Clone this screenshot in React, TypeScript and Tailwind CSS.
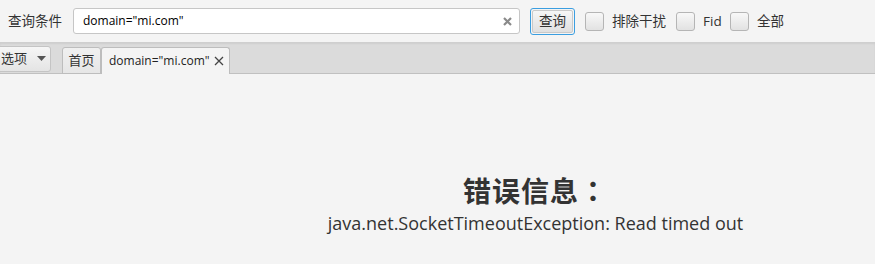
import React from "react";

const font = { fontFamily: '"Open Sans", "Noto Sans CJK SC", sans-serif' };
const titleFont = { fontFamily: '"Noto Sans CJK TC", sans-serif' };

function Check({ label }: { label: string }) {
  return (
    <div className="flex items-center gap-[8px] whitespace-nowrap">
      <div className="w-[19px] h-[19px] shrink-0 rounded-[3px] border border-[#b5b5b5] bg-gradient-to-b from-[#f8f8f8] to-[#e2e2e2]" />
      <span className="text-[13.5px] text-[#333]">{label}</span>
    </div>
  );
}

export default function App() {
  return (
    <div className="w-[875px] h-[264px] bg-[#f4f4f4] overflow-hidden flex flex-col" style={font}>
      <div className="h-[42px] flex items-center pl-[8px] shrink-0 whitespace-nowrap">
        <span className="text-[13.5px] text-[#333] w-[65px]">查询条件</span>
        <div className="w-[447px] h-[26px] bg-white border border-[#c6c6c6] rounded-[3px] flex items-center pl-[9px] pr-[7px]">
          <span className="flex-1 text-[12px] text-black">domain="mi.com"</span>
          <svg width="9" height="9" viewBox="0 0 9 9">
            <path d="M1 1L8 8M8 1L1 8" stroke="#8a8a8a" strokeWidth="2.2" />
          </svg>
        </div>
        <div className="ml-[10px] w-[45px] h-[27px] rounded-[3px] border border-[#3b9ee0] p-[1px]">
          <div className="w-full h-full rounded-[2px] border border-[#c9c9c9] bg-gradient-to-b from-[#f6f6f6] to-[#e0e0e0] flex items-center justify-center text-[13.5px] text-[#333]">
            查询
          </div>
        </div>
        <div className="ml-[10px] flex items-center gap-[9px]">
          <div className="w-[82px] shrink-0"><Check label="排除干扰" /></div>
          <div className="w-[45px] shrink-0"><Check label="Fid" /></div>
          <Check label="全部" />
        </div>
      </div>
      <div className="h-[32px] bg-[#dbdbdb] border-b border-[#c0c0c0] shadow-[inset_0_2px_2px_rgba(0,0,0,0.06)] flex items-end shrink-0 whitespace-nowrap">
        <div className="ml-[-8px] mb-[1px] w-[59px] h-[26px] rounded-[3px] border border-[#c4c4c4] bg-gradient-to-b from-[#f6f6f6] to-[#e4e4e4] flex items-center pl-[8px] gap-[10px]">
          <span className="text-[13px] text-[#333]">选项</span>
          <svg width="9" height="6" viewBox="0 0 9 6"><path d="M0 0H9L4.5 5Z" fill="#555" /></svg>
        </div>
        <div className="ml-[11px] w-[39px] h-[27px] mb-[-1px] rounded-t-[3px] border border-[#bdbdbd] bg-gradient-to-b from-[#f0f0f0] to-[#e6e6e6] flex items-center justify-center text-[13px] text-[#333]">
          首页
        </div>
        <div className="w-[129px] h-[27px] mb-[-1px] rounded-t-[3px] border border-b-0 border-[#bdbdbd] bg-[#f4f4f4] flex items-center pl-[7px] gap-[4px] text-[12px] text-[#222]">
          <span>domain="mi.com"</span>
          <svg width="10" height="10" viewBox="0 0 10 10"><path d="M1 1L9 9M9 1L1 9" stroke="#444" strokeWidth="1.3" /></svg>
        </div>
      </div>
      <div className="flex-1 flex flex-col items-center pl-[196px] pt-[100px]">
        <div className="text-[28px] font-bold text-[#333] leading-[32px] tracking-[1px]" style={titleFont}>错误信息：</div>
        <div className="text-[18px] text-[#333] leading-[24px] mt-[5px]">java.net.SocketTimeoutException: Read timed out</div>
      </div>
    </div>
  );
}
